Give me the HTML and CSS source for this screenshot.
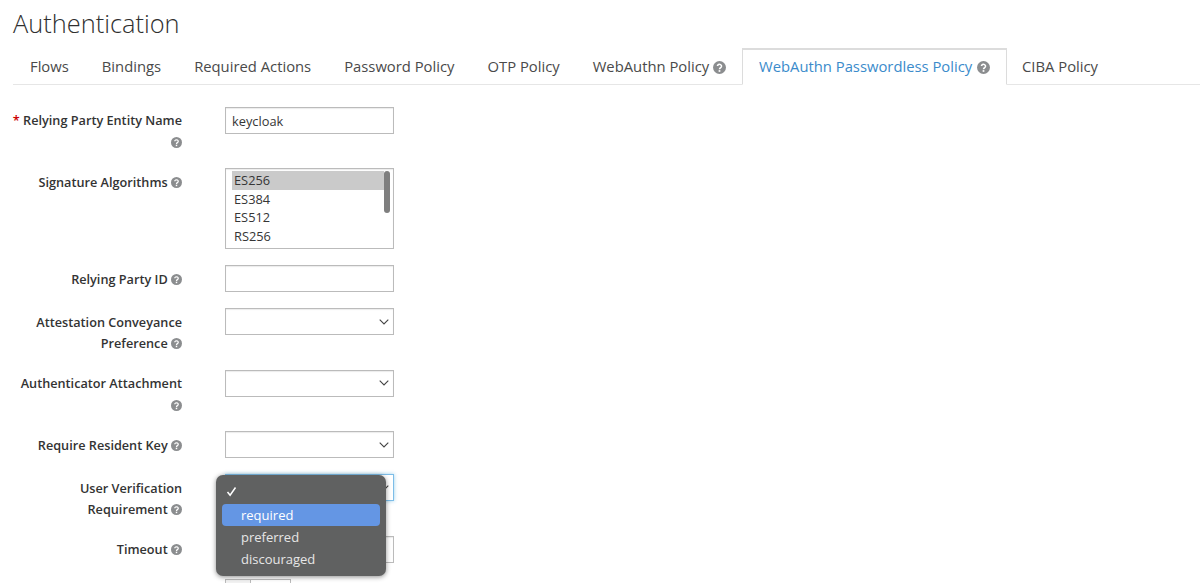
FILE: index.html
```html
<!DOCTYPE html>
<html lang="en">
<head>
    <meta charset="UTF-8">
    <title>Authentication</title>
    <link rel="stylesheet" href="styles.css">
</head>
<body>
    <svg class="defs" width="0" height="0">
        <symbol id="help" viewBox="0 0 12 12">
            <circle cx="6" cy="6" r="6" fill="#8b8d8f"/>
            <path d="M4.1 4.7a1.9 1.7 0 1 1 2.9 1.5c-.7.4-1 .7-1 1.4" fill="none" stroke="#fff" stroke-width="1.4"/>
            <rect x="5.2" y="8.4" width="1.6" height="1.6" fill="#fff"/>
        </symbol>
    </svg>

    <h1 class="page-title">Authentication</h1>

    <ul class="tabs">
        <li>Flows</li>
        <li>Bindings</li>
        <li>Required Actions</li>
        <li>Password Policy</li>
        <li>OTP Policy</li>
        <li>WebAuthn Policy <svg class="help help-tab"><use href="#help"/></svg></li>
        <li class="active">WebAuthn Passwordless Policy <svg class="help help-tab"><use href="#help"/></svg></li>
        <li>CIBA Policy</li>
    </ul>

    <form class="policy-form">
        <div class="form-row">
            <label><span class="required">*</span> Relying Party Entity Name <svg class="help"><use href="#help"/></svg></label>
            <input type="text" class="field" value="keycloak">
        </div>

        <div class="form-row">
            <label>Signature Algorithms <svg class="help"><use href="#help"/></svg></label>
            <div class="listbox">
                <div class="option selected">ES256</div>
                <div class="option">ES384</div>
                <div class="option">ES512</div>
                <div class="option">RS256</div>
                <div class="thumb"></div>
            </div>
        </div>

        <div class="form-row">
            <label>Relying Party ID <svg class="help"><use href="#help"/></svg></label>
            <input type="text" class="field">
        </div>

        <div class="form-row">
            <label>Attestation Conveyance Preference <svg class="help"><use href="#help"/></svg></label>
            <select class="field"><option></option></select>
        </div>

        <div class="form-row">
            <label>Authenticator Attachment <svg class="help"><use href="#help"/></svg></label>
            <select class="field"><option></option></select>
        </div>

        <div class="form-row">
            <label>Require Resident Key <svg class="help"><use href="#help"/></svg></label>
            <select class="field"><option></option></select>
        </div>

        <div class="form-row">
            <label>User Verification Requirement <svg class="help"><use href="#help"/></svg></label>
            <div class="select-wrap">
                <select class="field focused"><option></option></select>
                <!-- native popup menu, open over the select -->
                <div class="popup">
                    <div class="popup-item check-item"><svg class="check" viewBox="0 0 11 11"><path d="M1.5 6l2.6 3.2L9.5 1.5" fill="none" stroke="#fff" stroke-width="1.5"/></svg></div>
                    <div class="popup-item current">required</div>
                    <div class="popup-item">preferred</div>
                    <div class="popup-item">discouraged</div>
                </div>
            </div>
        </div>

        <div class="form-row">
            <label>Timeout <svg class="help"><use href="#help"/></svg></label>
            <input type="text" class="field">
        </div>

        <div class="form-row">
            <label></label>
            <div class="btn-pair">
                <div class="btn-box small"></div>
                <div class="btn-box"></div>
            </div>
        </div>
    </form>
</body>
</html>
```

FILE: styles.css
```css
html, body {
    height: 100%;
    overflow: hidden;
}

body {
    margin: 0;
    padding: 0 0 0 13px;
    font-family: "Open Sans", Arial, sans-serif;
    color: #363636;
    background-color: #fff;
}

.defs {
    position: absolute;
}

.page-title {
    margin: 0;
    height: 48px;
    padding-top: 6px;
    box-sizing: border-box;
    font-size: 25.4px;
    line-height: 35px;
    font-weight: 300;
    color: #2f2f2f;
}

.tabs {
    display: flex;
    margin: 0 0 21.8px;
    padding: 0;
    list-style: none;
    height: 37px;
    box-sizing: border-box;
    border-bottom: 1px solid #e6e6e6;
}

.tabs li {
    padding: 0 16px 0 17px;
    font-size: 14.8px;
    line-height: 36px;
    color: #4a4a4a;
    white-space: nowrap;
}

.tabs li.active {
    height: 37px;
    padding: 0 16px;
    border: 1px solid #dcdcdc;
    border-bottom: 1px solid #fff;
    border-top-width: 2px;
    line-height: 33px;
    box-sizing: border-box;
    background: #fff;
    color: #3b8bcb;
}

.tabs li.active + li {
    padding-left: 15px;
}

.form-row {
    display: flex;
    align-items: flex-start;
    margin-bottom: 16px;
}

.form-row label {
    flex: none;
    width: 171px;
    margin: 0 43px -1px -2px;
    padding-top: 3.5px;
    font-size: 12.7px;
    line-height: 21.5px;
    font-weight: 600;
    text-align: right;
    color: #333;
}

.required {
    color: #c00;
}

.help {
    display: inline-block;
    width: 11px;
    height: 11px;
    vertical-align: -1px;
}

.help-tab {
    width: 13px;
    height: 13px;
    vertical-align: -2px;
}

.active .help-tab {
    margin-left: 1px;
}

.field {
    display: block;
    width: 169px;
    height: 27px;
    margin: 0;
    padding: 1px 6px 0;
    box-sizing: border-box;
    border: 1px solid #bbb;
    border-radius: 0;
    outline: none;
    background-color: #fff;
    font-family: inherit;
    font-size: 12.8px;
    color: #363636;
    box-shadow: inset 0 1px 1px rgba(0, 0, 0, 0.08);
}

select.field {
    appearance: none;
    background-image: url("data:image/svg+xml,%3Csvg xmlns='http://www.w3.org/2000/svg' width='10' height='6'%3E%3Cpath d='M.7.7L5 5l4.3-4.3' fill='none' stroke='%23444' stroke-width='1.1'/%3E%3C/svg%3E");
    background-repeat: no-repeat;
    background-position: right 4px center;
}

.field.focused {
    border-color: #7dbde8;
    box-shadow: 0 0 4px rgba(0, 136, 206, 0.4);
}

.listbox {
    position: relative;
    width: 169px;
    height: 81px;
    padding: 2px 6px;
    box-sizing: border-box;
    border: 1px solid #bbb;
    box-shadow: inset 0 1px 1px rgba(0, 0, 0, 0.08);
}

.option {
    height: 18.6px;
    padding-left: 2px;
    font-size: 12.8px;
    line-height: 18.6px;
}

.option.selected {
    background-color: #cacaca;
    width: 150px;
}

.thumb {
    position: absolute;
    top: 2px;
    right: 3px;
    width: 6px;
    height: 42px;
    border-radius: 3px;
    background-color: #7f7f7f;
}

.select-wrap {
    position: relative;
}

.popup {
    position: absolute;
    top: 1px;
    left: -9px;
    width: 170px;
    height: 101px;
    padding: 6px 6px 0;
    box-sizing: border-box;
    border-radius: 7px;
    background-color: #606161;
    box-shadow: 0 1px 5px rgba(0, 0, 0, 0.45);
}

.popup-item {
    height: 22.3px;
    padding-left: 19px;
    border-radius: 4px;
    font-size: 13px;
    line-height: 22px;
    color: #e6e6e6;
}

.popup-item.current {
    background-color: #6496e4;
    color: #fff;
}

.check-item {
    padding-left: 4px;
    padding-top: 5px;
    height: 17.3px;
}

.check {
    display: block;
    width: 11px;
    height: 11px;
}

.btn-pair {
    display: flex;
}

.btn-box {
    width: 41px;
    height: 27px;
    box-sizing: border-box;
    border: 1px solid #bbb;
}

.btn-box.small {
    width: 25px;
    border-right: 0;
    background-color: #f2f2f2;
}
```
